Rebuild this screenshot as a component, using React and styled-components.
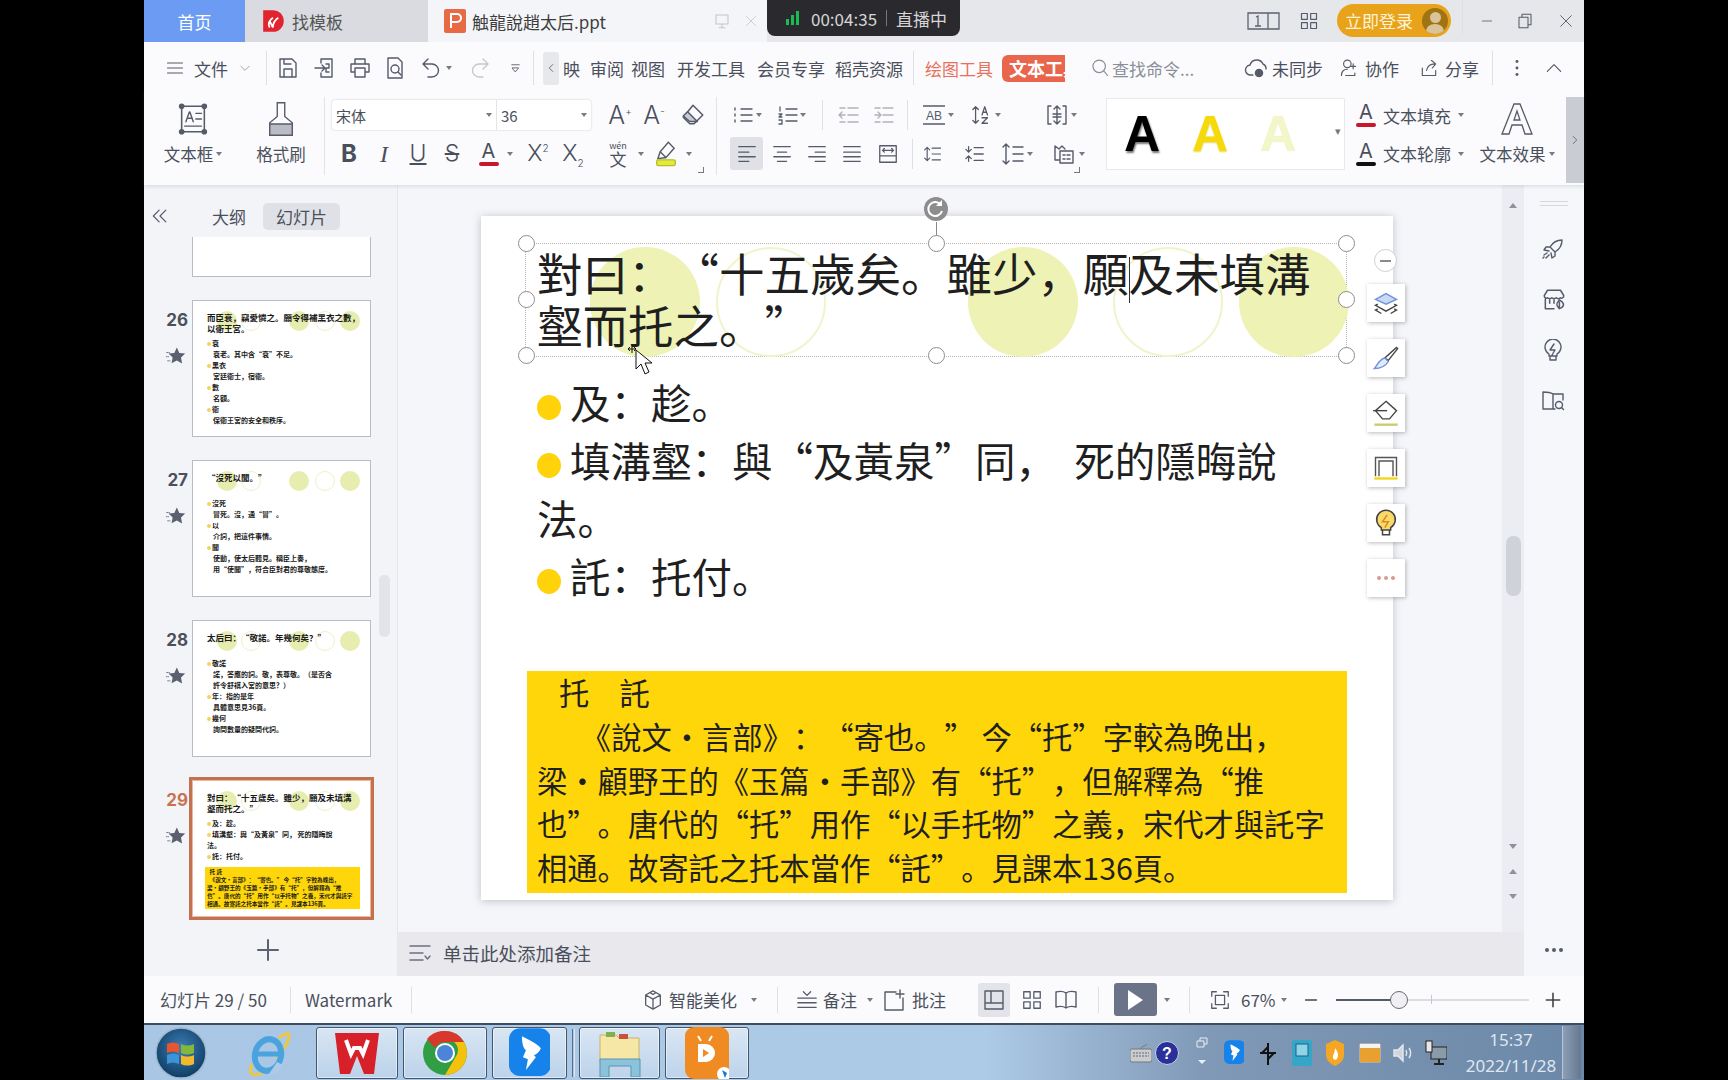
import React from "react";
import styled, { createGlobalStyle } from "styled-components";

const Global = createGlobalStyle`
  html, body { margin: 0; padding: 0; background: #000; }
  * { box-sizing: border-box; }
  body {
    font-family: "Noto Sans CJK SC", "Noto Sans", sans-serif;
    color: #4a4f5c;
    text-spacing-trim: space-all;
  }
`;

const P = {
  menu: <path d="M3 6h18M3 12h18M3 18h18" />,
  chev: <path d="M5 9l7 7 7-7" />,
  chevUp: <path d="M4 16l8-8 8 8" />,
  chevL: <path d="M15 6l-6 6 6 6" />,
  chevR: <path d="M9 6l6 6-6 6" />,
  save: <path d="M4 3h12l4 4v14H4zM8 21v-8h8v8M8 3v5h7" />,
  exp: <path d="M8 7V3h11v18H8v-4M2 12h10M9 9l3 3-3 3M13 8h3v4h-3v4h3" />,
  print: <path d="M7 8V3h10v5M7 16H3V8h18v8h-4M7 12h10v9H7z" />,
  prev: <><path d="M5 2h10l4 4v16H5z" /><circle cx="12" cy="13" r="4" /><path d="M15 16l3 3" /></>,
  undo: <path d="M9 3L4 8l5 5M4 8h9a6.5 6.5 0 010 13H9" />,
  redo: <path d="M15 3l5 5-5 5M20 8h-9a6.5 6.5 0 000 13h4" />,
  dd: <path d="M6 6h12M7 11h10l-5 6z" />,
  search: <><circle cx="11" cy="10" r="7.5" /><path d="M16.5 15.5l4.5 5.5" /></>,
  cloud: <><path d="M9 19H7a5 5 0 01-1-10 7 7 0 0113-1 5 5 0 013 5" /><circle cx="15" cy="17" r="5" fill="#555b69" stroke="#fff" /></>,
  user: <><circle cx="10" cy="7" r="4.5" /><path d="M3 21c0-5 3-7.5 7-7.5M8 21h11v-3M17 7v6M14 10h6" /></>,
  share: <path d="M4 12v9h16v-6M9 15c1-5 4-8 10-8M15 3l5 4-4 5" />,
  dots: <g fill="#555b69" stroke="none"><circle cx="12" cy="5" r="1.6" /><circle cx="12" cy="12" r="1.6" /><circle cx="12" cy="19" r="1.6" /></g>,
  textbox: <><path d="M4 3h16v18H4z" strokeWidth="1.1" /><circle cx="4" cy="3" r="1.3" fill="#555b69" /><circle cx="20" cy="3" r="1.3" fill="#555b69" /><circle cx="4" cy="21" r="1.3" fill="#555b69" /><circle cx="20" cy="21" r="1.3" fill="#555b69" /><path d="M7 14l2.4-7h.4l2.4 7M8 11.5h3.5M14 8h4M14 12h4M6 17h12" strokeWidth="1" /></>,
  eraser: <><path d="M12 3l9 9-8 8H9l-6-6z" /><path d="M7 9l9 9H9l-6-5z" fill="#c8cbd2" /></>,
  bullets: <path d="M10 6h11M10 12h11M10 18h11M4 5v2M4 11v2M4 17v2" />,
  numbers: <path d="M10 6h11M10 12h11M10 18h11M4 4v4M3 11h3l-3 3h3M3 17h3v4H3" strokeWidth="1.3" />,
  indL: <path d="M11 5h10M11 12h10M11 19h10M3 5h5M3 19h5M8 12H3M5 9l-3 3 3 3" stroke="#aeb2ba" />,
  indR: <path d="M11 5h10M11 12h10M11 19h10M3 5h5M3 19h5M3 12h5M6 9l3 3-3 3" stroke="#aeb2ba" />,
  alL: <path d="M3 4h18M3 10h11M3 15h18M3 20h11" />,
  alC: <path d="M3 4h18M7 10h10M3 15h18M7 20h10" />,
  alR: <path d="M3 4h18M10 10h11M3 15h18M10 20h11" />,
  alJ: <path d="M3 4h18M3 10h18M3 15h18M3 20h18" />,
  alD: <path d="M3 3h18v18H3zM3 14h18M6 8h12M6 8l2-2M6 8l2 2M18 8l-2-2M18 8l-2 2" />,
  sortAZ: <path d="M5 3v18M2 18l3 3 3-3M2 6l3-3 3 3M12 12l3-9 3 9M13 9h4M12 15h6l-6 6h6" />,
  dist: <path d="M3 3h3M3 3v18h3M21 3h-3M21 3v18h-3M12 3v18M9 6l3-3 3 3M9 18l3 3 3-3M8 11h8M8 14h8" />,
  lineUp: <path d="M11 5h10M11 12h10M11 19h10M5 4v16M2 7l3-3 3 3M2 17l3 3 3-3" />,
  lineDn: <path d="M11 5h10M11 12h10M11 19h10M5 4v6M2 7l3 3 3-3M5 14v6M2 17l3-3 3 3" />,
  lineH: <path d="M12 5h10M12 12h10M12 19h10M5 2v20M2 5l3-3 3 3M2 19l3 3 3-3" />,
  columns: <path d="M3 13V4l4 3 3-3 3 3M3 13v5h4M8 9h13v12H8zM11 13h2M15 13h3M11 17h2M15 17h3" />,
  star: <><path d="M13 3l3 6.5 7 .8-5 4.8 1.3 7L13 18.6 6.7 22 8 15 3 10.3l7-.8z" fill="#5a6070" stroke="none" /><path d="M1 9h3M0 14h3M2 19h3" strokeDasharray="1.4 1.4" /></>,
  dblL: <path d="M11 5l-7 7 7 7M19 5l-7 7 7 7" />,
  plus: <path d="M12 2v20M2 12h20" />,
  notes: <path d="M2 5h20M2 12h13M2 19h13M17 15l2.5 3 2.5-3" />,
  cube: <path d="M12 2l8 4.5v11L12 22l-8-4.5v-11zM4 6.5l8 4.5 8-4.5M12 11v11M9 4l3 2 3-2" />,
  memo: <path d="M2 10h20M2 15h20M2 20h20M8 3l4 4 4-4" />,
  review: <path d="M14 4H3v18h18V10M18 2v8M14 6h8" />,
  viewN: <path d="M3 3h18v18H3zM9 3v12M3 15h18" />,
  grid: <path d="M3 3h7v7H3zM14 3h7v7h-7zM3 14h7v7H3zM14 14h7v7h-7z" />,
  book: <path d="M12 5C9 3 6 3 2 4v15c4-1 7-1 10 1 3-2 6-2 10-1V4c-4-1-7-1-10 1zM12 5v15" />,
  fit: <path d="M3 8V3h5M16 3h5v5M3 16v5h5M16 21h5v-5M7 7h10v10H7z" />,
  minus: <path d="M4 12h16" />,
  rocket: <path d="M9 10C12 5 16 3 21 3c0 5-2 9-7 12l-5-5zM9 10H5l-2 3 5 1M14 15v4l-3 2-1-5M3 18l3-2M5 21l3-3M2 21l1-1" />,
  store: <path d="M6 3h12l3 5c0 2-2 3-3 2-1 1-3 1-4 0-1 1-3 1-4 0-1 1-3 1-4 0-1 1-3 0-3-2zM4 11v9h8M8 12v3M12 12v3M17 12c-3 3-3 5-1 7l1 1 2-1c3-2 2-5-2-7zM17 14v6" />,
  bulb: <path d="M8 17v-2a8 8 0 118 0v2zM9 17v4h6v-4M13 5l-4 6h5l-3 5" />,
  bookS: <><path d="M12 5C9 3 6 3 2 3v17h10V5M12 5h10v6M12 20h2" /><circle cx="18" cy="16" r="3.5" /><path d="M20.5 18.5l2 2" /></>,
  monitor: <path d="M4 4h16v12H4zM12 16v4M8 21h8" />,
  close: <path d="M4 4l16 16M20 4L4 20" />,
  restore: <path d="M8 7V3h12v14h-4M4 7h12v14H4z" />,
};

const Ico = ({ n, s = 24, c = "#555b69", w = 1.4 }) => (
  <svg width={s} height={s} viewBox="0 0 24 24" fill="none" stroke={c} strokeWidth={w} strokeLinecap="round" strokeLinejoin="round">
    {P[n]}
  </svg>
);

const Page = styled.div`
  width: 1728px;
  height: 1080px;
  background: #000;
  padding: 0 144px;
  overflow: hidden;
`;

const Shell = styled.div`
  width: 1440px;
  height: 1080px;
  display: flex;
  flex-direction: column;
  background: #fbfbfd;
`;

const TitleBar = styled.div`
  height: 42px;
  display: flex;
  align-items: flex-start;
  background: #e6e7eb;
`;

const Tab = styled.div`
  width: ${(p) => p.$w}px;
  height: 42px;
  display: flex;
  align-items: center;
  justify-content: ${(p) => (p.$center ? "center" : "flex-start")};
  gap: 6px;
  padding-left: ${(p) => p.$pl || 0}px;
  background: ${(p) => p.$bg};
  color: ${(p) => p.$fg};
  font-size: 17px;
`;

const LivePill = styled.div`
  width: 193px;
  height: 36px;
  border-radius: 0 0 8px 8px;
  background: #2a2a2e;
  color: #d6d6d6;
  font-size: 17px;
  display: flex;
  align-items: center;
  padding-left: 19px;
`;

const Bars = styled.span`
  display: flex;
  align-items: flex-end;
  gap: 2px;
  margin-right: 12px;
`;

const Bar = styled.i`
  width: 3px;
  height: ${(p) => p.$h}px;
  background: #1db954;
`;

const LiveSep = styled.i`
  width: 1px;
  height: 16px;
  background: #777;
  margin: 0 9px;
`;

const Tool = styled.div`
  flex: none;
  width: ${(p) => p.$w}px;
  height: ${(p) => p.$h || 30}px;
  margin-left: ${(p) => p.$ml || 0}px;
  display: flex;
  align-items: center;
  justify-content: center;
  background: ${(p) => p.$bg || "transparent"};
  border-radius: ${(p) => (p.$bg ? 3 : 0)}px;
`;

const LoginPill = styled.div`
  width: 114px;
  height: 33px;
  margin-left: 18px;
  margin-top: 4px;
  border-radius: 17px;
  background: #e8a31a;
  color: #fdf3d8;
  font-size: 17px;
  display: flex;
  align-items: center;
  justify-content: space-between;
  padding: 0 3px 0 8px;
`;

const Avatar = styled.span`
  width: 26px;
  height: 26px;
  border-radius: 50%;
  background: #a07414;
  position: relative;
  overflow: hidden;
  &::before {
    content: "";
    position: absolute;
    left: 8px;
    top: 4px;
    width: 11px;
    height: 11px;
    border-radius: 50%;
    background: #d9c49a;
  }
  &::after {
    content: "";
    position: absolute;
    left: 4px;
    top: 16px;
    width: 18px;
    height: 14px;
    border-radius: 50%;
    background: #d9c49a;
  }
`;

const VSep = styled.i`
  flex: none;
  width: 1px;
  height: ${(p) => p.$h || 30}px;
  margin-left: ${(p) => p.$ml || 0}px;
  background: #dfe0e5;
`;

const MenuBar = styled.div`
  height: 46px;
  padding-top: 6px;
  display: flex;
  align-items: center;
  background: #fbfbfd;
  color: #4a4f5c;
`;

const MenuText = styled.span`
  flex: none;
  width: ${(p) => p.$w}px;
  margin-left: ${(p) => p.$ml || 0}px;
  color: ${(p) => p.$c || "inherit"};
  white-space: nowrap;
  font-size: 17px;
`;

const ActiveTab = styled.div`
  flex: none;
  width: 63px;
  height: 27px;
  margin-left: 9px;
  padding-left: 7px;
  background: #e9654b;
  border-radius: 6px 0 0 6px;
  color: #fff;
  font-weight: 700;
  font-size: 18px;
  line-height: 27px;
  white-space: nowrap;
  overflow: hidden;
`;

const Ribbon = styled.div`
  height: 97px;
  display: flex;
  align-items: flex-start;
  padding-top: 9px;
  padding-left: 4px;
  background: #fbfbfd;
  position: relative;
  box-shadow: 0 2px 3px rgba(120, 125, 140, 0.18);
  z-index: 2;
`;

const Big = styled.div`
  flex: none;
  width: ${(p) => p.$w}px;
  height: 78px;
  padding-top: 3px;
  display: grid;
  grid-template-rows: 37px 33px;
  justify-items: center;
  align-items: center;
  font-size: 16.5px;
  white-space: nowrap;
`;

const Group = styled.div`
  flex: none;
  position: relative;
  width: ${(p) => p.$w}px;
  height: 78px;
  padding: 3px 0 0 ${(p) => p.$pl}px;
  border-left: 1px solid #e3e4e9;
  display: flex;
  flex-direction: column;
  gap: 7px;
`;

const Row = styled.div`
  display: flex;
  align-items: center;
  height: ${(p) => p.$h || 30}px;
`;

const Corner = styled.i`
  position: absolute;
  right: 12px;
  bottom: 2px;
  width: 6px;
  height: 6px;
  border-right: 1px solid #777;
  border-bottom: 1px solid #777;
`;

const Combo = styled.div`
  flex: none;
  width: 259px;
  height: 30px;
  display: flex;
  align-items: center;
  background: #fff;
  border-radius: 3px;
  box-shadow: 0 0 2px rgba(90, 90, 110, 0.35);
  font-size: 15px;
`;

const ComboCell = styled.div`
  width: ${(p) => p.$w}px;
  height: 30px;
  display: flex;
  align-items: center;
  justify-content: space-between;
  padding: 0 4px;
  border-right: ${(p) => (p.$line ? "1px solid #e4e5ea" : "none")};
`;

const Caret = styled.i`
  flex: none;
  width: 0;
  height: 0;
  margin-left: ${(p) => p.$ml || 0}px;
  border-left: 3px solid transparent;
  border-right: 3px solid transparent;
  border-top: 4px solid ${(p) => p.$c || "#777b86"};
`;

const Glyph = styled.span`
  font-family: ${(p) => (p.$serif ? '"Liberation Serif"' : 'Inter, "Liberation Sans"')}, sans-serif;
  font-size: ${(p) => p.$fs || 22}px;
  font-weight: ${(p) => p.$fw || 400};
  font-style: ${(p) => (p.$it ? "italic" : "normal")};
  text-decoration: ${(p) => p.$deco || "none"};
  color: #4a4f5c;
  line-height: 1;
  & sup, & sub { font-size: 10px; line-height: 0; }
`;

const ColorA = styled.span`
  display: inline-flex;
  flex-direction: column;
  align-items: center;
  font-family: Inter, "Liberation Sans", sans-serif;
  font-size: ${(p) => p.$fs || 20}px;
  line-height: 19px;
  color: #4a4f5c;
  &::after {
    content: "";
    width: ${(p) => p.$fs || 20}px;
    height: 4px;
    margin-top: 1px;
    border-radius: 2px;
    background: ${(p) => p.$c};
  }
`;

const WenIcon = styled.span`
  display: inline-flex;
  flex-direction: column;
  align-items: center;
  font-size: 9px;
  line-height: 9px;
  & b { font-size: 17px; line-height: 17px; font-weight: 400; }
`;

const Gallery = styled.div`
  flex: none;
  width: 239px;
  height: 72px;
  margin: 1px 0 0 14px;
  display: flex;
  align-items: center;
  background: #fff;
  border: 1px solid #e8e9ed;
  position: relative;
`;

const StyleA = styled.span`
  width: ${(p) => p.$w}px;
  margin-left: ${(p) => p.$ml}px;
  font-family: "Liberation Sans", sans-serif;
  font-weight: 700;
  font-size: 50px;
  line-height: 1;
  text-align: center;
  color: ${(p) => p.$c};
  text-shadow: ${(p) => p.$sh};
`;

const GalleryMore = styled.span`
  position: absolute;
  right: 3px;
  top: 28px;
  font-size: 11px;
  line-height: 6px;
  color: #777;
`;

const FillCol = styled.div`
  flex: none;
  width: 117px;
  margin-left: 11px;
  padding-top: 3px;
  display: flex;
  flex-direction: column;
  gap: 7px;
  font-size: 17px;
  white-space: nowrap;
`;

const FillRow = styled.div`
  height: ${(p) => p.$h}px;
  display: flex;
  align-items: center;
  gap: 7px;
`;

const RibbonScroll = styled.div`
  position: absolute;
  right: 0;
  top: 9px;
  width: 18px;
  height: 86px;
  background: #c9ccd2;
  display: flex;
  align-items: center;
  justify-content: center;
`;

const Body = styled.div`
  flex: 1;
  min-height: 0;
  display: flex;
`;

const Pane = styled.div`
  flex: none;
  width: 254px;
  background: #f3f4f8;
  border-right: 1px solid #e6e7ec;
  display: flex;
  flex-direction: column;
  position: relative;
`;

const PaneTop = styled.div`
  height: 52px;
  padding-top: 10px;
  display: flex;
  align-items: center;
  font-size: 17px;
`;

const PaneTabOn = styled.div`
  width: 77px;
  height: 27px;
  margin-left: 17px;
  border-radius: 5px;
  background: #dfe1e6;
  text-align: center;
  line-height: 27px;
`;

const PaneTabOff = styled.div`
  width: 34px;
  margin-left: 42px;
`;

const ThumbList = styled.div`
  height: 693px;
  display: flex;
  flex-direction: column;
  gap: 23px;
  overflow: hidden;
  padding-bottom: 4px;
`;

const ThumbRow = styled.div`
  flex: none;
  display: flex;
`;

const NumCol = styled.div`
  width: 48px;
  padding-right: 4px;
  display: flex;
  flex-direction: column;
  align-items: flex-end;
  gap: 5px;
`;

const Num = styled.div`
  height: 40px;
  font-family: Inter, "Liberation Sans", sans-serif;
  font-weight: 700;
  font-size: 17px;
  line-height: 40px;
  color: ${(p) => (p.$on ? "#c8734f" : "#4c505c")};
`;

const StarBox = styled.div`
  margin-right: 2px;
  height: 20px;
`;

const Thumb = styled.div`
  position: relative;
  width: 179px;
  height: ${(p) => p.$h || 137}px;
  background: #fff;
  border: 1px solid #b9bcc6;
  ${(p) => (p.$h ? "border-top: none;" : "")}
  ${(p) => (p.$on ? "outline: 3px solid #c4714f; outline-offset: 0; border-color: #e9b9a4;" : "")}
  padding: 11px 6px 0 14px;
  overflow: ${(p) => (p.$on ? "visible" : "hidden")};
  color: #1a1a1a;
  font-weight: 700;
`;

const ThumbDot = styled.i`
  position: absolute;
  top: 10px;
  left: ${(p) => p.$x}px;
  width: 20px;
  height: 20px;
  border-radius: 50%;
  background: ${(p) => (p.$ring ? "transparent" : "#e7edaf")};
  border: ${(p) => (p.$ring ? "1px solid #eef2c8" : "none")};
`;

const ThumbTitle = styled.div`
  position: relative;
  height: 26px;
  font-size: 8.5px;
  line-height: 11px;
  white-space: nowrap;
`;

const ThumbLine = styled.div`
  font-size: 7px;
  line-height: ${(p) => p.$lh || 11}px;
  padding-left: ${(p) => (p.$sub ? 6 : 0)}px;
  white-space: nowrap;
`;

const ThumbBullet = styled.i`
  display: inline-block;
  width: 4px;
  height: 4px;
  margin-right: 1px;
  border-radius: 50%;
  background: #f5d35a;
`;

const ThumbBox = styled.div`
  position: absolute;
  left: 12px;
  top: 86px;
  width: 155px;
  height: 42px;
  padding: 1px 2px;
  background: #ffd60a;
  font-size: 5.6px;
  line-height: 8px;
  white-space: pre;
  overflow: hidden;
`;

const PaneScroll = styled.i`
  position: absolute;
  left: 235px;
  top: 390px;
  width: 11px;
  height: 62px;
  border-radius: 5px;
  background: #e3e4e9;
`;

const AddRow = styled.div`
  height: 40px;
  margin-left: 112px;
  display: flex;
  align-items: center;
`;

const Work = styled.div`
  flex: none;
  width: 1126px;
  display: flex;
  flex-direction: column;
`;

const Canvas = styled.div`
  flex: 1;
  display: flex;
  background: #f5f6fa;
  min-height: 0;
`;

const Stage = styled.div`
  flex: none;
  width: 1104px;
  padding: 31px 0 0 83px;
`;

const Slide = styled.div`
  position: relative;
  width: 912px;
  height: 684px;
  display: flex;
  flex-direction: column;
  background: #fff;
  box-shadow: 0 1px 8px rgba(90, 95, 110, 0.35);
  font-family: "Noto Sans CJK SC", sans-serif;
  color: #1f1f1f;
`;

const TitleBox = styled.div`
  position: relative;
  width: 822px;
  height: 114px;
  margin: 27px 0 0 44px;
  padding: 2px 0 0 11px;
  border: 1px dotted #b5b5b5;
  font-size: 45.5px;
  line-height: 52px;
  white-space: nowrap;
`;

const DecoCircle = styled.i`
  position: absolute;
  top: 3px;
  left: ${(p) => p.$x}px;
  width: 110px;
  height: 110px;
  border-radius: 50%;
  background: ${(p) => (p.$ring ? "transparent" : "#eef2b5")};
  border: ${(p) => (p.$ring ? "2px solid #f1f4cb" : "none")};
`;

const TitleText = styled.div`
  position: relative;
`;

const TextCaret = styled.i`
  display: inline-block;
  width: 1px;
  height: 46px;
  margin: -12px -1px -12px 0;
  vertical-align: middle;
  background: #333;
`;

const Handle = styled.i`
  position: absolute;
  left: ${(p) => p.$x}%;
  top: ${(p) => p.$y}%;
  width: 17px;
  height: 17px;
  margin: -9px 0 0 -8px;
  border-radius: 50%;
  background: #fff;
  border: 1.5px solid #8d8d8d;
`;

const RotateWrap = styled.div`
  position: absolute;
  left: 50%;
  top: -48px;
  width: 26px;
  margin-left: -13px;
  display: flex;
  flex-direction: column;
  align-items: center;
`;

const RotateStem = styled.i`
  width: 1px;
  height: 22px;
  background: #888;
`;

const Pointer = styled.div`
  position: absolute;
  left: 100px;
  top: 98px;
  line-height: 0;
`;

const BodyText = styled.div`
  margin: 16px 0 0 56px;
  font-size: 40.5px;
  line-height: 58px;
  white-space: pre;
`;

const Dot = styled.i`
  display: inline-block;
  width: 24px;
  height: 25px;
  margin-right: 9px;
  border-radius: 50%;
  vertical-align: -1px;
  background: #ffd20a;
`;

const YellowBox = styled.div`
  width: 820px;
  height: 222px;
  margin: auto 0 7px 46px;
  padding: 0 0 0 10px;
  background: #ffd60a;
  font-size: 30.3px;
  line-height: 43.8px;
  white-space: pre;
`;

const YellowHead = styled.div`
  padding-left: 22px;
`;

const SideTools = styled.div`
  position: absolute;
  left: 886px;
  top: 68px;
  display: flex;
  flex-direction: column;
  gap: 17px;
`;

const SideBtn = styled.div`
  width: 38px;
  height: 38px;
  display: flex;
  align-items: center;
  justify-content: center;
  background: #fff;
  box-shadow: 1px 1px 4px rgba(80, 80, 90, 0.4);
`;

const Collapse = styled.div`
  position: absolute;
  left: 893px;
  top: 33px;
  width: 23px;
  height: 23px;
  border-radius: 50%;
  background: #fff;
  border: 1.5px solid #d0d0d4;
  display: flex;
  align-items: center;
  justify-content: center;
  &::after {
    content: "";
    width: 11px;
    height: 2px;
    background: #8a8a8e;
  }
`;

const Dots3 = styled.span`
  display: flex;
  gap: 3px;
`;

const Dot3 = styled.i`
  width: 4px;
  height: 4px;
  border-radius: 50%;
  background: ${(p) => p.$c};
`;

const VScroll = styled.div`
  flex: none;
  width: 22px;
  background: #ecedf2;
  display: flex;
  flex-direction: column;
  align-items: center;
  padding-top: 18px;
`;

const ScrollThumb = styled.i`
  width: 15px;
  height: 60px;
  margin-top: 328px;
  border-radius: 7px;
  background: #d0d2d9;
`;

const ScrollBtns = styled.div`
  margin-top: 248px;
  display: flex;
  flex-direction: column;
  gap: 20px;
  align-items: center;
`;

const ArrowUp = styled.i`
  width: 0;
  height: 0;
  border-left: 4px solid transparent;
  border-right: 4px solid transparent;
  border-bottom: 5px solid #8f929b;
`;

const ArrowDown = styled(ArrowUp)`
  border-bottom: none;
  border-top: 5px solid #8f929b;
`;

const Notes = styled.div`
  flex: none;
  height: 44px;
  padding: 0 0 3px 10px;
  display: flex;
  align-items: center;
  background: #e9e9ed;
  font-size: 18.5px;
  gap: 11px;
`;

const Strip = styled.div`
  flex: none;
  width: 60px;
  background: #f6f7fb;
  display: flex;
  flex-direction: column;
  align-items: center;
  padding-top: 16px;
`;

const StripLines = styled.i`
  width: 28px;
  height: 5px;
  border-top: 1px solid #d6d7dd;
  border-bottom: 1px solid #d6d7dd;
  margin-bottom: 31px;
`;

const StripIcons = styled.div`
  display: flex;
  flex-direction: column;
  gap: 26px;
`;

const StripMore = styled.div`
  margin-top: auto;
  margin-bottom: 24px;
`;

const Status = styled.div`
  height: 49px;
  display: flex;
  align-items: center;
  background: #fbfbfd;
  border-bottom: 2px solid #3f4d5e;
`;

const PlayBtn = styled.div`
  flex: none;
  width: 43px;
  height: 33px;
  margin-left: 15px;
  border-radius: 3px;
  background: #6a7388;
  display: flex;
  align-items: center;
  justify-content: center;
  &::after {
    content: "";
    border-left: 15px solid #fff;
    border-top: 10px solid transparent;
    border-bottom: 10px solid transparent;
  }
`;

const Slider = styled.div`
  position: relative;
  flex: none;
  width: 193px;
  height: 2px;
  margin-left: 17px;
  background: #dcdde2;
`;

const SliderFill = styled.i`
  position: absolute;
  left: 0;
  top: 0;
  height: 2px;
  width: 56px;
  background: #555b69;
`;

const SliderKnob = styled.i`
  position: absolute;
  left: 54px;
  top: -8px;
  width: 18px;
  height: 18px;
  border-radius: 50%;
  background: #f0f0f3;
  border: 1.5px solid #666b78;
`;

const SliderTick = styled.i`
  position: absolute;
  left: 95px;
  top: -4px;
  width: 1px;
  height: 9px;
  background: #c8c9cf;
`;

const Taskbar = styled.div`
  flex: none;
  height: 55px;
  display: flex;
  align-items: center;
  background: linear-gradient(90deg, #a9c6e4 0, #adcae7 840px, #8099b6 1060px, #6c88a8 1440px);
`;

const TaskIcon = styled.div`
  flex: none;
  width: ${(p) => p.$w}px;
  height: 52px;
  margin-left: ${(p) => p.$ml || 0}px;
  display: flex;
  align-items: center;
  justify-content: center;
`;

const TaskBtn = styled(TaskIcon)`
  border: 1px solid #42566c;
  border-radius: 3px;
  background: linear-gradient(180deg, rgba(255, 255, 255, 0.55), rgba(255, 255, 255, 0.2));
  box-shadow: inset 0 0 0 1px rgba(255, 255, 255, 0.5);
`;

const TaskGrip = styled.i`
  flex: none;
  width: 3px;
  height: 48px;
  margin-left: 5px;
  border-left: 1px solid #5a6e85;
  border-right: 1px solid #dbe6f2;
`;

const TrayIcon = styled.div`
  flex: none;
  width: ${(p) => p.$w || 22}px;
  margin-left: ${(p) => p.$ml || 0}px;
  display: flex;
  align-items: center;
  justify-content: center;
`;

const Clock = styled.div`
  flex: none;
  width: 102px;
  margin-left: 13px;
  text-align: center;
  color: #dfe7f0;
  font-family: "Noto Sans", sans-serif;
  font-size: 17px;
  line-height: 26px;
`;

const ShowDesk = styled.div`
  flex: none;
  width: 19px;
  height: 53px;
  background: linear-gradient(90deg, #8b9eb6, #65788f);
  border-left: 1px solid #b9c6d6;
`;

const circles = [
  [108, false],
  [234, true],
  [486, false],
  [631, true],
  [757, false],
];
const thumbCircles = [
  [24, false],
  [48, true],
  [96, false],
  [122, true],
  [147, false],
];

const thumbs = [
  {
    n: 26,
    title: ["而臣衰，竊愛憐之。願令得補黑衣之數，", "以衛王宮。"],
    lines: [
      ["b", "衰"],
      ["s", "衰老。其中含“衰”不足。"],
      ["b", "黑衣"],
      ["s", "宮廷衛士，宿衛。"],
      ["b", "數"],
      ["s", "名額。"],
      ["b", "衛"],
      ["s", "保衛王宮的安全和秩序。"],
    ],
  },
  {
    n: 27,
    title: ["“沒死以聞。”"],
    lines: [
      ["b", "沒死"],
      ["s", "冒死。沒，通“冒”。"],
      ["b", "以"],
      ["s", "介詞，把這件事情。"],
      ["b", "聞"],
      ["s", "使動，使太后聽見。稱臣上奏，"],
      ["s", "用“使聞”，符合臣對君的尊敬態度。"],
    ],
  },
  {
    n: 28,
    title: ["太后曰：“敬諾。年幾何矣？”"],
    lines: [
      ["b", "敬諾"],
      ["s", "諾，答應的詞。敬，表尊敬。（是否含"],
      ["s", "許令舒祺入宮的意思？）"],
      ["b", "年：指的是年"],
      ["s", "具體意思見36頁。"],
      ["b", "幾何"],
      ["s", "詢問數量的疑問代詞。"],
    ],
  },
];

const Logo = {
  Doc: () => (
    <svg width="22" height="24" viewBox="0 0 22 24">
      <rect width="22" height="24" rx="2" fill="#e76a45" />
      <path d="M7 19V5h6a4 4 0 010 8H7" fill="none" stroke="#fff" strokeWidth="2" />
    </svg>
  ),
  Shell: () => (
    <svg width="24" height="26" viewBox="0 0 22 24">
      <path d="M1 2h9a10 10 0 010 20H1z" fill="#e0232e" />
      <path d="M7 18c-2-4 0-7 3-9M10 18c0-4 2-7 5-9M7 12l3 6" fill="none" stroke="#fff" strokeWidth="1.6" />
    </svg>
  ),
  Orb: () => (
    <svg width="52" height="52" viewBox="0 0 52 52">
      <defs>
        <radialGradient id="orb" cx="50%" cy="40%" r="60%">
          <stop offset="0" stopColor="#3d7fb8" />
          <stop offset="1" stopColor="#0f3d63" />
        </radialGradient>
      </defs>
      <circle cx="26" cy="26" r="25" fill="url(#orb)" stroke="#9fb7cc" strokeWidth="1.5" />
      <path d="M12 17c4-2 8-2 12 0v9c-4-2-8-2-12 0z" fill="#e8552f" />
      <path d="M26 17c4 2 8 2 13 0v9c-5 2-9 2-13 0z" fill="#84b83a" />
      <path d="M12 28c4-2 8-2 12 0v9c-4-2-8-2-12 0z" fill="#3b94d8" />
      <path d="M26 28c4 2 8 2 13 0v9c-5 2-9 2-13 0z" fill="#f2b82e" />
    </svg>
  ),
  IE: () => (
    <svg width="44" height="50" viewBox="0 0 44 50">
      <path d="M5 36c-4 9 0 14 10 9M32 10c6-5 11-6 10-1-1 7-7 15-14 20" fill="none" stroke="#f0c63c" strokeWidth="3" />
      <ellipse cx="21" cy="27" rx="13" ry="16" fill="none" stroke="#4aa3df" strokeWidth="6" transform="rotate(14 21 27)" />
      <path d="M9 26h25" stroke="#4aa3df" strokeWidth="5" />
      <path d="M30 34l6 3-6 8-8 1z" fill="#adcae7" />
    </svg>
  ),
  Wps: () => (
    <svg width="46" height="42" viewBox="0 0 46 42">
      <path d="M1 1h44l-5 41H30l-7-18-7 18H6z" fill="#d8202a" />
      <path d="M12 8l5 14 3-6h6l3 6 5-14" fill="none" stroke="#fff" strokeWidth="4" />
    </svg>
  ),
  Chrome: () => (
    <svg width="44" height="44" viewBox="0 0 44 44">
      <circle cx="22" cy="22" r="22" fill="#2f9e44" />
      <path d="M22 0a22 22 0 0119 11H22a11 11 0 00-10 6L4 8A22 22 0 0122 0z" fill="#d9372c" />
      <path d="M41 11a22 22 0 01-19 33l10-17a11 11 0 00-1-16z" fill="#f4c20d" />
      <circle cx="22" cy="22" r="10" fill="#fff" />
      <circle cx="22" cy="22" r="8" fill="#4a85d8" />
    </svg>
  ),
  Ding: ({ s = 44 }) => (
    <svg width={s * 0.95} height={s * 1.1} viewBox="0 0 42 48">
      <rect width="42" height="48" rx="11" fill="#1583ea" />
      <path d="M13 8c8 4 16 8 19 12-1 3-4 6-7 7l2 2-10 13 2-11-5-2 3-7c-3-2-4-8-4-14z" fill="#fff" />
    </svg>
  ),
  Folder: () => (
    <svg width="46" height="48" viewBox="0 0 46 48">
      <path d="M3 6h16l3 3h20v24H3z" fill="#f6e7a6" stroke="#c9b26a" />
      <rect x="9" y="3" width="9" height="5" fill="#7fb24f" />
      <rect x="22" y="5" width="9" height="5" fill="#c9503c" />
      <path d="M3 30h40v18h-9V37H12v11H3z" fill="#8cc3dc" stroke="#5d93ad" />
    </svg>
  ),
  Play: () => (
    <svg width="44" height="52" viewBox="0 0 44 52">
      <rect width="44" height="52" rx="9" fill="#f08a22" />
      <path d="M13 17h8a9 9 0 010 18h-8z" fill="#fff" />
      <path d="M18 22l6 4-6 4z" fill="#f08a22" />
      <path d="M16 14l-3-5M24 14l3-5" stroke="#fff" strokeWidth="2" />
      <circle cx="39" cy="47" r="7" fill="#fff" />
      <path d="M37 43l5 3-2 5z" fill="#1a78c8" />
    </svg>
  ),
};

const ThumbContent = ({ t }) => (
  <>
    {thumbCircles.map(([x, ring]) => (
      <ThumbDot key={x} $x={x} $ring={ring} />
    ))}
    <ThumbTitle>
      {t.title.map((l) => (
        <div key={l}>{l}</div>
      ))}
    </ThumbTitle>
    {t.lines.map(([k, l]) => (
      <ThumbLine key={l} $sub={k === "s"}>
        {k === "b" && <ThumbBullet />}
        {l}
      </ThumbLine>
    ))}
  </>
);

const NumBlock = ({ n, on }) => (
  <NumCol>
    <Num $on={on}>{n}</Num>
    <StarBox>
      <Ico n="star" s={20} w={1} />
    </StarBox>
  </NumCol>
);

export default function App() {
  return (
    <>
      <Global />
      <Page>
        <Shell>
          <TitleBar>
            <Tab $w={101} $center $bg="#6c9bf4" $fg="#fff">首页</Tab>
            <Tab $w={183} $pl={17} $bg="#d9dbe1" $fg="#555">
              <Logo.Shell />
              找模板
            </Tab>
            <Tab $w={339} $pl={16} $bg="#f4f5f8" $fg="#3d3d3d">
              <Logo.Doc />
              触龍說趙太后.ppt
              <Tool $w={20} $h={24} $ml={100}><Ico n="monitor" s={18} c="#c4c6cc" /></Tool>
              <Tool $w={14} $h={24} $ml={6}><Ico n="close" s={14} c="#c4c6cc" /></Tool>
            </Tab>
            <LivePill>
              <Bars>
                <Bar $h={6} />
                <Bar $h={10} />
                <Bar $h={14} />
              </Bars>
              00:04:35
              <LiveSep />
              直播中
            </LivePill>
            <Tool $w={33} $h={42} $ml={287}>
              <svg width="33" height="20" viewBox="0 0 33 20" fill="none" stroke="#5c6272" strokeWidth="1.3">
                <path d="M1 2h31v16H1zM21 2v16M26 2h6v16h-6" />
                <path d="M9 6l2-1v10M8 15h6" />
              </svg>
            </Tool>
            <Tool $w={20} $h={42} $ml={19}><Ico n="grid" s={20} /></Tool>
            <LoginPill>
              立即登录
              <Avatar />
            </LoginPill>
            <VSep $ml={11} $h={34} />
            <Tool $w={14} $h={42} $ml={17}><Ico n="minus" s={16} /></Tool>
            <Tool $w={18} $h={42} $ml={22}><Ico n="restore" s={20} /></Tool>
            <Tool $w={16} $h={42} $ml={24}><Ico n="close" s={16} /></Tool>
          </TitleBar>

          <MenuBar>
            <Tool $w={22} $ml={20}><Ico n="menu" s={20} /></Tool>
            <MenuText $w={36} $ml={8}>文件</MenuText>
            <Tool $w={14} $ml={8}><Ico n="chev" s={14} c="#8a8e98" /></Tool>
            <VSep $ml={14} $h={34} />
            <Tool $w={24} $ml={9}><Ico n="save" /></Tool>
            <Tool $w={24} $ml={13}><Ico n="exp" /></Tool>
            <Tool $w={24} $ml={11}><Ico n="print" /></Tool>
            <Tool $w={24} $ml={11}><Ico n="prev" /></Tool>
            <Tool $w={24} $ml={12}><Ico n="undo" /></Tool>
            <Caret $ml={3} />
            <Tool $w={24} $ml={16}><Ico n="redo" c="#c6c8ce" /></Tool>
            <Tool $w={16} $ml={15}><Ico n="dd" s={15} /></Tool>
            <VSep $ml={10} $h={34} />
            <Tool $w={16} $h={33} $ml={9} $bg="#e6e8ec"><Ico n="chevL" s={14} /></Tool>
            <MenuText $w={17} $ml={4}>映</MenuText>
            <MenuText $w={34} $ml={10}>审阅</MenuText>
            <MenuText $w={34} $ml={7}>视图</MenuText>
            <MenuText $w={68} $ml={12}>开发工具</MenuText>
            <MenuText $w={68} $ml={12}>会员专享</MenuText>
            <MenuText $w={68} $ml={10}>稻壳资源</MenuText>
            <VSep $ml={10} $h={34} />
            <MenuText $w={68} $ml={11} $c="#e8705a">绘图工具</MenuText>
            <ActiveTab>文本工具</ActiveTab>
            <Tool $w={20} $ml={25}><Ico n="search" s={20} c="#8a8e98" /></Tool>
            <MenuText $w={84} $ml={2} $c="#8a8e98">查找命令...</MenuText>
            <Tool $w={26} $ml={47}><Ico n="cloud" /></Tool>
            <MenuText $w={51} $ml={3}>未同步</MenuText>
            <Tool $w={20} $ml={16}><Ico n="user" s={20} /></Tool>
            <MenuText $w={34} $ml={6}>协作</MenuText>
            <Tool $w={22} $ml={19}><Ico n="share" s={20} /></Tool>
            <MenuText $w={34} $ml={5}>分享</MenuText>
            <VSep $ml={13} $h={34} />
            <Tool $w={22} $ml={13}><Ico n="dots" s={22} /></Tool>
            <Tool $w={20} $ml={16}><Ico n="chevUp" s={20} /></Tool>
          </MenuBar>

          <Ribbon>
            <Big $w={90}>
              <Ico n="textbox" s={34} />
              <Row>文本框<Caret $ml={3} /></Row>
            </Big>
            <Big $w={86}>
              <svg width="30" height="36" viewBox="0 0 24 28" fill="none" stroke="#555b69" strokeWidth="1.1">
                <path d="M9 1h6v11l6 5v10H3V17l6-5z" />
                <path d="M3 18h18v9H3z" fill="#b9bcc4" />
              </svg>
              <Row>格式刷</Row>
            </Big>
            <Group $w={392} $pl={7}>
              <Row>
                <Combo>
                  <ComboCell $w={165} $line>宋体<Caret /></ComboCell>
                  <ComboCell $w={94}>36<Caret /></ComboCell>
                </Combo>
                <Tool $w={34} $ml={12}><Glyph $fw={300} $fs={25}>A<sup>+</sup></Glyph></Tool>
                <Tool $w={34}><Glyph $fw={300} $fs={25}>A<sup>-</sup></Glyph></Tool>
                <Tool $w={34} $ml={5}><Ico n="eraser" s={26} /></Tool>
              </Row>
              <Row $h={33}>
                <Tool $w={34}><Glyph $fw={700} $fs={24}>B</Glyph></Tool>
                <Tool $w={36}><Glyph $serif $it $fs={24}>I</Glyph></Tool>
                <Tool $w={32}><Glyph $fw={300} $fs={23} $deco="underline">U</Glyph></Tool>
                <Tool $w={36}><Glyph $fw={300} $fs={23} $deco="line-through">S</Glyph></Tool>
                <Tool $w={37}><ColorA $c="#c8162c">A</ColorA></Tool>
                <Caret />
                <Tool $w={46} $ml={2}><Glyph $fw={300} $fs={23}>X<sup>2</sup></Glyph></Tool>
                <Tool $w={24}><Glyph $fw={300} $fs={23}>X<sub>2</sub></Glyph></Tool>
                <Tool $w={40} $ml={13}><WenIcon>wén<b>文</b></WenIcon></Tool>
                <Caret />
                <Tool $w={40} $ml={2}>
                  <svg width="28" height="28" viewBox="0 0 24 24" fill="none" stroke="#555b69" strokeWidth="1.2">
                    <path d="M14 2l5 5-7 8-5-5zM7 10l-2 6 7-1" />
                    <rect x="4" y="17" width="16" height="5" rx="1.5" fill="#e4ea3a" stroke="#b8bd30" />
                  </svg>
                </Tool>
                <Caret />
              </Row>
              <Corner />
            </Group>
            <Group $w={376} $pl={13}>
              <Row>
                <Tool $w={26}><Ico n="bullets" /></Tool>
                <Caret />
                <Tool $w={24} $ml={14}><Ico n="numbers" /></Tool>
                <Caret />
                <VSep $ml={16} />
                <Tool $w={26} $ml={13}><Ico n="indL" /></Tool>
                <Tool $w={26} $ml={9}><Ico n="indR" /></Tool>
                <VSep $ml={10} />
                <Tool $w={24} $ml={14}>
                  <svg width="24" height="24" viewBox="0 0 24 24" fill="none" stroke="#555b69">
                    <path d="M1 3h22M1 21h22" strokeWidth="1.6" />
                    <text x="12" y="17" fontFamily="Liberation Sans" fontSize="12" fill="#555b69" stroke="none" textAnchor="middle">AB</text>
                  </svg>
                </Tool>
                <Caret $ml={2} />
                <Tool $w={22} $ml={17}><Ico n="sortAZ" s={22} /></Tool>
                <Caret $ml={2} />
                <Tool $w={24} $ml={44}><Ico n="dist" /></Tool>
                <Caret $ml={2} />
              </Row>
              <Row $h={33}>
                <Tool $w={33} $h={33} $bg="#dfe1e6"><Ico n="alL" s={22} /></Tool>
                <Tool $w={22} $ml={8}><Ico n="alC" s={22} /></Tool>
                <Tool $w={22} $ml={13}><Ico n="alR" s={22} /></Tool>
                <Tool $w={22} $ml={13}><Ico n="alJ" s={22} /></Tool>
                <Tool $w={24} $ml={13}><Ico n="alD" s={22} /></Tool>
                <VSep $ml={12} />
                <Tool $w={20} $ml={10}><Ico n="lineUp" s={22} /></Tool>
                <Tool $w={22} $ml={21}><Ico n="lineDn" s={22} /></Tool>
                <Tool $w={24} $ml={15}><Ico n="lineH" /></Tool>
                <Caret $ml={2} />
                <Tool $w={26} $ml={18}><Ico n="columns" /></Tool>
                <Caret $ml={2} />
              </Row>
              <Corner />
            </Group>
            <Gallery>
              <StyleA $w={40} $ml={15} $c="#000" $sh="1px 2px 2px #777">A</StyleA>
              <StyleA $w={40} $ml={28} $c="#f5d90a" $sh="0 1px 2px #e6d566">A</StyleA>
              <StyleA $w={40} $ml={28} $c="#f3f6c8" $sh="0 0 1px #dfe3a8">A</StyleA>
              <GalleryMore>▾</GalleryMore>
            </Gallery>
            <FillCol>
              <FillRow $h={30}>
                <ColorA $c="#c8162c" $fs={20}>A</ColorA>
                文本填充<Caret />
              </FillRow>
              <FillRow $h={33}>
                <ColorA $c="#111" $fs={20}>A</ColorA>
                文本轮廓<Caret />
              </FillRow>
            </FillCol>
            <Big $w={88}>
              <svg width="38" height="36" viewBox="0 0 38 36" fill="none" stroke="#555b69" strokeWidth="1.3">
                <path d="M4 33L16 3h6l12 30h-7l-3-9H14l-3 9zM16 19h6l-3-9z" />
              </svg>
              <Row>文本效果<Caret $ml={3} /></Row>
            </Big>
            <RibbonScroll><Ico n="chevR" s={14} /></RibbonScroll>
          </Ribbon>

          <Body>
            <Pane>
              <PaneTop>
                <Tool $w={20} $ml={6} $h={24}><Ico n="dblL" s={20} /></Tool>
                <PaneTabOff>大纲</PaneTabOff>
                <PaneTabOn>幻灯片</PaneTabOn>
              </PaneTop>
              <ThumbList>
                <ThumbRow>
                  <NumCol />
                  <Thumb $h={40} />
                </ThumbRow>
                {thumbs.map((t) => (
                  <ThumbRow key={t.n}>
                    <NumBlock n={t.n} />
                    <Thumb><ThumbContent t={t} /></Thumb>
                  </ThumbRow>
                ))}
                <ThumbRow>
                  <NumBlock n={29} on />
                  <Thumb $on>
                    {thumbCircles.map(([x, ring]) => (
                      <ThumbDot key={x} $x={x} $ring={ring} />
                    ))}
                    <ThumbTitle>
                      <div>對曰：“十五歲矣。雖少，願及未填溝</div>
                      <div>壑而托之。”</div>
                    </ThumbTitle>
                    <ThumbLine $lh={11}><ThumbBullet />及：趁。</ThumbLine>
                    <ThumbLine $lh={11}><ThumbBullet />填溝壑：與“及黃泉”同， 死的隱晦說</ThumbLine>
                    <ThumbLine $lh={11}>法。</ThumbLine>
                    <ThumbLine $lh={11}><ThumbBullet />託：托付。</ThumbLine>
                    <ThumbBox>
                      {"  托 託\n"}
                      {"  《說文‧言部》：“寄也。” 今“托”字較為晚出，\n"}
                      {"梁‧顧野王的《玉篇‧手部》有“托”，但解釋為“推\n"}
                      {"也”。唐代的“托”用作“以手托物”之義，宋代才與託字\n"}
                      {"相通。故寄託之托本當作“託”。見課本136頁。"}
                    </ThumbBox>
                  </Thumb>
                </ThumbRow>
              </ThumbList>
              <AddRow><Ico n="plus" s={24} w={2} c="#5c6272" /></AddRow>
              <PaneScroll />
            </Pane>

            <Work>
              <Canvas>
                <Stage>
                  <Slide>
                    <TitleBox>
                      {circles.map(([x, ring]) => (
                        <DecoCircle key={x} $x={x - 44} $ring={ring} />
                      ))}
                      <TitleText>
                        對曰：“十五歲矣。雖少，願<TextCaret />及未填溝
                        <br />
                        壑而托之。”
                      </TitleText>
                      <RotateWrap>
                        <svg width="26" height="26" viewBox="0 0 26 26" fill="none">
                          <circle cx="13" cy="13" r="12" fill="#8d8d8d" />
                          <path d="M18 9a7 7 0 10 1 6" stroke="#fff" strokeWidth="2" />
                          <path d="M19 4v6h-6z" fill="#fff" />
                        </svg>
                        <RotateStem />
                      </RotateWrap>
                      {[0, 50, 100].map((x) =>
                        [0, 50, 100].map((y) =>
                          x === 50 && y === 50 ? null : <Handle key={`${x}-${y}`} $x={x} $y={y} />
                        )
                      )}
                      <Pointer>
                        <svg width="28" height="36" viewBox="0 0 28 36" fill="#fff" stroke="#111" strokeWidth="1">
                          <path d="M2 7h8M6 3v8M2 7l2-2M2 7l2 2M10 7L8 5M10 7L8 9" fill="none" />
                          <path d="M10 8l0 19 5-5 4 10 4-2-4-9 7 0z" />
                        </svg>
                      </Pointer>
                    </TitleBox>
                    <BodyText>
                      <Dot />及：趁。{"\n"}
                      <Dot />填溝壑：與“及黃泉”同，  死的隱晦說{"\n"}
                      法。{"\n"}
                      <Dot />託：托付。
                    </BodyText>
                    <YellowBox>
                      <YellowHead>托　託</YellowHead>
                      {"　  《說文‧言部》：“寄也。” 今“托”字較為晚出，\n"}
                      {"梁‧顧野王的《玉篇‧手部》有“托”，但解釋為“推\n"}
                      {"也”。唐代的“托”用作“以手托物”之義，宋代才與託字\n"}
                      {"相通。故寄託之托本當作“託”。見課本136頁。"}
                    </YellowBox>
                    <Collapse />
                    <SideTools>
                      <SideBtn>
                        <svg width="28" height="28" viewBox="0 0 24 24" fill="none" strokeWidth="1.2">
                          <path d="M12 13l-9-4 9-5 9 5z" fill="#c9d8f5" stroke="#6f93d8" />
                          <path d="M5 13l-2 1 9 5 9-5-2-1M5 17l-2 1 5 3M19 17l2 1-5 3" stroke="#444" />
                        </svg>
                      </SideBtn>
                      <SideBtn>
                        <svg width="28" height="28" viewBox="0 0 24 24" fill="none" strokeWidth="1.2">
                          <path d="M21 3l1 1-8 10-3-2z" stroke="#444" />
                          <path d="M11 12l3 3c-3 5-8 6-12 6 2-2 4-8 9-9z" stroke="#6f93d8" fill="#e3ebfa" />
                        </svg>
                      </SideBtn>
                      <SideBtn>
                        <svg width="28" height="28" viewBox="0 0 24 24" fill="none" strokeWidth="1.2">
                          <path d="M12 2l9 8-6 7H9L3 10z" stroke="#444" />
                          <path d="M1 10h12" stroke="#444" />
                          <path d="M2 22h20" stroke="#c9cc6a" strokeWidth="2" />
                        </svg>
                      </SideBtn>
                      <SideBtn>
                        <svg width="28" height="28" viewBox="0 0 24 24" fill="none" strokeWidth="1.2">
                          <path d="M3 19V3h18v16M6 19V6h12v13" stroke="#555" />
                          <path d="M2 21h20" stroke="#f3d617" strokeWidth="2" />
                        </svg>
                      </SideBtn>
                      <SideBtn>
                        <svg width="28" height="28" viewBox="0 0 24 24" fill="none" strokeWidth="1.3">
                          <path d="M8 18v-2a8 8 0 118 0v2z" stroke="#444" fill="#f8d96a" />
                          <path d="M9 18v4h6v-4" stroke="#444" />
                          <path d="M13 5l-4 6h5l-3 5" stroke="#d98a1a" />
                        </svg>
                      </SideBtn>
                      <SideBtn>
                        <Dots3>
                          <Dot3 $c="#d99a90" />
                          <Dot3 $c="#d99a90" />
                          <Dot3 $c="#d99a90" />
                        </Dots3>
                      </SideBtn>
                    </SideTools>
                  </Slide>
                </Stage>
                <VScroll>
                  <ArrowUp />
                  <ScrollThumb />
                  <ScrollBtns>
                    <ArrowDown />
                    <ArrowUp />
                    <ArrowDown />
                  </ScrollBtns>
                </VScroll>
              </Canvas>
              <Notes>
                <Ico n="notes" s={24} c="#6b707c" />
                单击此处添加备注
              </Notes>
            </Work>

            <Strip>
              <StripLines />
              <StripIcons>
                <Ico n="rocket" s={24} />
                <Ico n="store" s={26} />
                <Ico n="bulb" s={24} />
                <Ico n="bookS" s={24} />
              </StripIcons>
              <StripMore>
                <Dots3>
                  <Dot3 $c="#555b69" />
                  <Dot3 $c="#555b69" />
                  <Dot3 $c="#555b69" />
                </Dots3>
              </StripMore>
            </Strip>
          </Body>

          <Status>
            <MenuText $w={116} $ml={16}>幻灯片 29 / 50</MenuText>
            <VSep $ml={14} $h={26} />
            <MenuText $w={94} $ml={14}>Watermark</MenuText>
            <VSep $ml={12} $h={26} />
            <Tool $w={24} $ml={229}><Ico n="cube" s={22} /></Tool>
            <MenuText $w={68} $ml={4}>智能美化</MenuText>
            <Caret $ml={14} />
            <VSep $ml={20} $h={26} />
            <Tool $w={24} $ml={17}><Ico n="memo" s={22} /></Tool>
            <MenuText $w={34} $ml={4}>备注</MenuText>
            <Caret $ml={10} />
            <Tool $w={24} $ml={9}><Ico n="review" s={24} /></Tool>
            <MenuText $w={34} $ml={6}>批注</MenuText>
            <Tool $w={32} $h={34} $ml={32} $bg="#e3e4e9"><Ico n="viewN" s={24} /></Tool>
            <Tool $w={24} $ml={10}><Ico n="grid" s={22} /></Tool>
            <Tool $w={24} $ml={10}><Ico n="book" s={24} /></Tool>
            <VSep $ml={20} $h={26} />
            <PlayBtn />
            <Caret $ml={7} />
            <VSep $ml={19} $h={26} />
            <Tool $w={24} $ml={18}><Ico n="fit" s={22} /></Tool>
            <MenuText $w={40} $ml={9}>67%</MenuText>
            <Caret />
            <Tool $w={16} $ml={16}><Ico n="minus" s={16} w={2.4} c="#444" /></Tool>
            <Slider>
              <SliderFill />
              <SliderTick />
              <SliderKnob />
            </Slider>
            <Tool $w={16} $ml={16}><Ico n="plus" s={16} w={2.4} c="#444" /></Tool>
          </Status>

          <Taskbar>
            <TaskIcon $w={52} $ml={11}><Logo.Orb /></TaskIcon>
            <TaskIcon $w={44} $ml={40}><Logo.IE /></TaskIcon>
            <TaskBtn $w={82} $ml={25}><Logo.Wps /></TaskBtn>
            <TaskBtn $w={84} $ml={5}><Logo.Chrome /></TaskBtn>
            <TaskBtn $w={75} $ml={5}><Logo.Ding /></TaskBtn>
            <TaskGrip />
            <TaskBtn $w={81} $ml={4}><Logo.Folder /></TaskBtn>
            <TaskBtn $w={84} $ml={5}><Logo.Play /></TaskBtn>
            <TrayIcon $ml={381}>
              <svg width="22" height="20" viewBox="0 0 22 20">
                <rect y="6" width="22" height="13" rx="2" fill="#c9ccd0" stroke="#777" />
                <path d="M3 10h16M3 13h16" stroke="#666" strokeDasharray="2 1" />
                <path d="M11 6c0-3 4-2 6-5" stroke="#777" fill="none" />
              </svg>
            </TrayIcon>
            <TrayIcon $w={26} $ml={2}>
              <svg width="24" height="26" viewBox="0 0 24 26">
                <circle cx="12" cy="13" r="11.5" fill="#2a2f9a" stroke="#c9d2e6" />
                <text x="12" y="19" fontSize="16" fontWeight="700" fontFamily="Liberation Sans" fill="#fff" textAnchor="middle">?</text>
              </svg>
            </TrayIcon>
            <TrayIcon $w={12} $ml={16}>
              <svg width="12" height="34" viewBox="0 0 12 34" fill="none" stroke="#e8eef5">
                <path d="M1 5h7v6H1zM4 5V2h7v6H8" />
                <path d="M2 24h8l-4 4z" fill="#e8eef5" stroke="none" />
              </svg>
            </TrayIcon>
            <TrayIcon $ml={15}><Logo.Ding s={22} /></TrayIcon>
            <TrayIcon $ml={12}>
              <svg width="22" height="26" viewBox="0 0 22 26" fill="none" stroke="#111" strokeWidth="2">
                <path d="M3 13h16M11 3v22M11 7l-6 6M11 19l6-6" />
              </svg>
            </TrayIcon>
            <TrayIcon $ml={12}>
              <svg width="20" height="26" viewBox="0 0 20 26">
                <rect width="20" height="26" rx="2" fill="#35a6c8" />
                <rect x="4" y="4" width="12" height="12" fill="#8cd4e6" stroke="#1c5f8a" />
              </svg>
            </TrayIcon>
            <TrayIcon $ml={11}>
              <svg width="18" height="26" viewBox="0 0 18 26">
                <path d="M9 0l9 4v11c0 6-5 9-9 11-4-2-9-5-9-11V4z" fill="#f5a623" />
                <path d="M9 8c3 4 4 7 2 11-2 2-5 0-4-3 1-3 2-5 2-8z" fill="#fff" />
              </svg>
            </TrayIcon>
            <TrayIcon $ml={13}>
              <svg width="22" height="20" viewBox="0 0 22 20">
                <rect width="22" height="20" fill="#f4f4f4" stroke="#666" />
                <rect x="1" y="5" width="20" height="14" fill="#e8a030" />
              </svg>
            </TrayIcon>
            <TrayIcon $ml={11}>
              <svg width="22" height="22" viewBox="0 0 22 22" fill="none" stroke="#e4e8ee" strokeWidth="1.4">
                <path d="M2 8h4l5-5v16l-5-5H2z" fill="#cfd5de" />
                <path d="M14 8c1 2 1 4 0 6M17 6c2 3 2 7 0 10" />
              </svg>
            </TrayIcon>
            <TrayIcon $ml={11}>
              <svg width="22" height="26" viewBox="0 0 22 26" fill="none">
                <rect x="6" y="7" width="16" height="12" fill="#8b9aa8" stroke="#222" />
                <path d="M14 19v4M9 24h10" stroke="#222" strokeWidth="2" />
                <rect x="1" y="1" width="6" height="11" fill="#e8e8e8" stroke="#222" />
              </svg>
            </TrayIcon>
            <Clock>
              15:37
              <br />
              2022/11/28
            </Clock>
            <ShowDesk />
          </Taskbar>
        </Shell>
      </Page>
    </>
  );
}
